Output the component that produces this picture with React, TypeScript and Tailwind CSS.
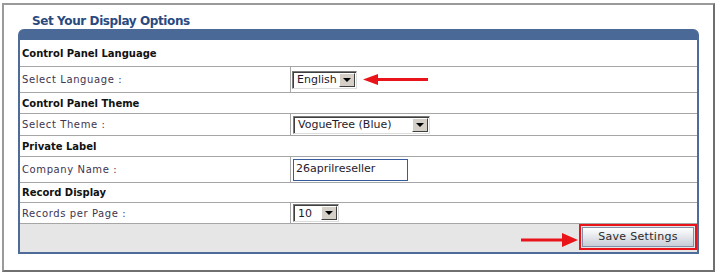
import type { ReactNode } from "react";

function Arrow({ dir }: { dir: "left" | "right" }) {
  if (dir === "left") {
    return (
      <svg width="65" height="11" viewBox="0 0 65 11" className="ml-[6px] block">
        <polygon points="0,5.5 15,0 15,11" fill="#e8141a" />
        <rect x="13" y="4" width="52" height="3" fill="#e8141a" />
      </svg>
    );
  }
  return (
    <svg width="57" height="14" viewBox="0 0 57 14" className="mt-[9px] mr-[1px] block">
      <rect x="0" y="5.5" width="44" height="3" fill="#e8141a" />
      <polygon points="57,7 41,0 41,14" fill="#e8141a" />
    </svg>
  );
}

function FakeSelect({ value, className }: { value: string; className: string }) {
  return (
    <div
      className={
        "flex h-[18px] items-center border border-[#7b7b7b] border-r-[#dcdcdc] border-b-[#dcdcdc] bg-white shadow-[inset_1px_1px_0_#404040] " +
        className
      }
    >
      <span className="flex-1 pl-[4px] text-[11px] leading-none text-[#1f1a2c]">{value}</span>
      <span className="mr-[1px] flex h-[14px] w-[16px] items-center justify-center border border-white border-r-[#404040] border-b-[#404040] bg-[#d4d0c8]">
        <span className="h-0 w-0 border-t-[4px] border-r-[4px] border-l-[4px] border-t-black border-r-transparent border-l-transparent" />
      </span>
    </div>
  );
}

function SectionRow({ title, height }: { title: string; height: string }) {
  return (
    <div
      className={
        "flex items-center border-b border-[#a6a6a6] pl-[2px] text-[10px] font-bold text-[#111] " + height
      }
    >
      {title}
    </div>
  );
}

function FieldRow({ label, height, children }: { label: string; height: string; children: ReactNode }) {
  return (
    <div className={"flex border-b border-[#a6a6a6] " + height}>
      <div className="flex w-[270px] items-center pl-[2px] text-[10px] tracking-[0.6px] text-[#3d3550]">
        {label}
      </div>
      <div className="flex flex-1 items-center border-l border-[#a6a6a6] pl-[2px]">{children}</div>
    </div>
  );
}

export default function App() {
  return (
    <div className="h-[273px] w-[717px] bg-white px-[2px] pt-[3px] pb-[1px] font-['DejaVu_Sans',Verdana,sans-serif]">
      <div className="h-full border-2 border-[#9a9a9a] border-r-[#6f6f6f] border-b-[#6f6f6f] bg-white">
        {/* Page title */}
        <div className="ml-[28px] pt-[9px] text-[12px] leading-[14px] font-bold tracking-[-0.4px] text-[#2a4a7f]">
          Set Your Display Options
        </div>

        {/* Options panel */}
        <div className="mt-[1px] ml-[14px] w-[681px] overflow-hidden rounded-t-[6px] border-2 border-t-0 border-[#4f6b99] bg-[#4b6996]">
          <div className="h-[11px]" />
          <div className="bg-white">
            <SectionRow title="Control Panel Language" height="h-[27px]" />
            <FieldRow label="Select Language :" height="h-[26px]">
              <div className="-ml-[1px] flex items-center">
                <FakeSelect value="English" className="w-[65px]" />
                <Arrow dir="left" />
              </div>
            </FieldRow>

            <SectionRow title="Control Panel Theme" height="h-[21px]" />
            <FieldRow label="Select Theme :" height="h-[22px]">
              <FakeSelect value="VogueTree (Blue)" className="w-[137px]" />
            </FieldRow>

            <SectionRow title="Private Label" height="h-[21px]" />
            <FieldRow label="Company Name :" height="h-[26px]">
              <div className="flex h-[22px] w-[115px] items-center border border-[#3a5a9e] bg-white pl-[2px] text-[11px] text-[#1f1a2c]">
                26aprilreseller
              </div>
            </FieldRow>

            <SectionRow title="Record Display" height="h-[20px]" />
            <FieldRow label="Records per Page :" height="h-[21px]">
              <FakeSelect value="10" className="w-[46px]" />
            </FieldRow>

            {/* Footer with action */}
            <div className="flex h-[28px] items-start justify-end bg-[#e6e6e6]">
              <Arrow dir="right" />
              <div className="flex h-[26px] w-[118px] border-2 border-[#e8141a] p-px">
                <button className="flex-1 border border-[#8190a8] bg-gradient-to-b from-[#ffffff] to-[#c8cdd7] text-[11px] tracking-[0.3px] text-[#2a2a2a]">
                  Save Settings
                </button>
              </div>
            </div>
          </div>
        </div>
      </div>
    </div>
  );
}
